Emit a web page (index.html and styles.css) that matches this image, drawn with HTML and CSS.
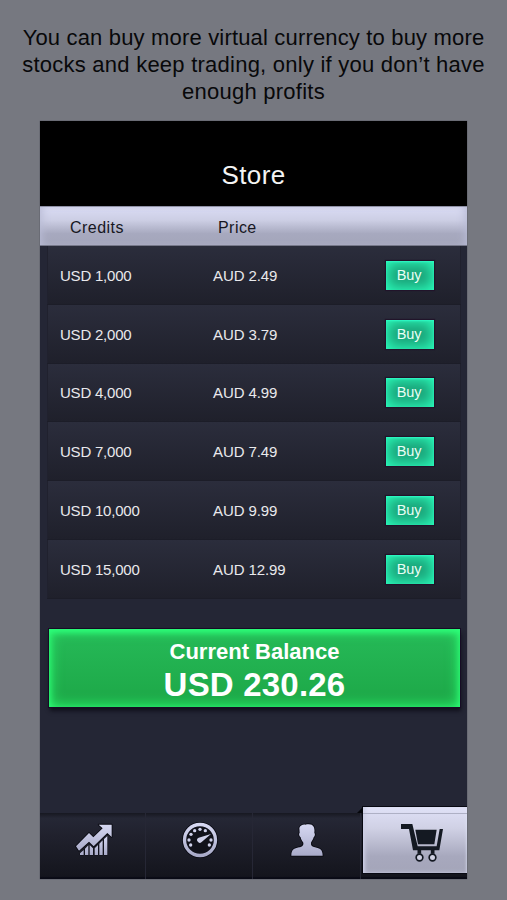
FILE: index.html
```html
<!DOCTYPE html>
<html lang="en">
<head>
<meta charset="utf-8">
<title>Store</title>
<link rel="stylesheet" href="styles.css">
</head>
<body>
<p class="intro"><span class="l1">You can buy more virtual currency to buy more</span><br><span class="l2">stocks and keep trading, only if you don’t have</span><br><span class="l3">enough profits</span></p>
<main class="phone">
  <header class="title"><h1>Store</h1></header>
  <div class="columns"><span>Credits</span><span class="price-head">Price</span></div>
  <ul class="offers">
    <li><span class="credits">USD 1,000</span><span class="price">AUD 2.49</span><button>Buy</button></li>
    <li><span class="credits">USD 2,000</span><span class="price">AUD 3.79</span><button>Buy</button></li>
    <li><span class="credits">USD 4,000</span><span class="price">AUD 4.99</span><button>Buy</button></li>
    <li><span class="credits">USD 7,000</span><span class="price">AUD 7.49</span><button>Buy</button></li>
    <li><span class="credits">USD 10,000</span><span class="price">AUD 9.99</span><button>Buy</button></li>
    <li><span class="credits">USD 15,000</span><span class="price">AUD 12.99</span><button>Buy</button></li>
  </ul>
  <section class="balance">
    <span class="label">Current Balance</span>
    <strong class="amount">USD 230.26</strong>
  </section>
  <nav class="tabs">
    <a class="tab">
      <svg width="40" height="40" viewBox="113 59 120 120">
        <defs><linearGradient id="silver" x1="0" y1="0" x2="0" y2="1"><stop offset="0" stop-color="#d6d8f2"/><stop offset="1" stop-color="#a9abc9"/></linearGradient></defs>
        <g fill="url(#silver)" stroke="#07080f" stroke-width="5" paint-order="stroke" stroke-linejoin="round">
          <path stroke-width="2" d="M131 164V159L142 149V164ZM146 164V145L156 135V164ZM160 164V134L170 144V164ZM175 164V144L185 134V164ZM189 164V130L199 120V164ZM203 164V116L213 107V164Z"/>
          <path d="M119 138 158 98 171 111 199 84 187 73H226V110L213 98 172 138 158 124 128 151Z"/>
        </g>
      </svg>
    </a>
    <a class="tab">
      <svg width="40" height="40" viewBox="104 59 120 120">
        <circle cx="164" cy="119" r="54" fill="#080911"/>
        <circle cx="164" cy="119" r="46.5" fill="#11121b" stroke="url(#silver)" stroke-width="10"/>
        <g fill="#cfd1eb">
          <circle cx="136" cy="134" r="5"/><circle cx="131" cy="119" r="5"/><circle cx="137" cy="102" r="5"/><circle cx="148" cy="91" r="5"/><circle cx="164" cy="87" r="5"/><circle cx="180" cy="91" r="5"/><circle cx="197" cy="119" r="5"/><circle cx="192" cy="134" r="5"/>
          <path d="M197 101 160 112A8 8 0 1 0 169 125Z"/>
        </g>
      </svg>
    </a>
    <a class="tab">
      <svg width="40" height="40" viewBox="106 59 120 120">
        <path fill="url(#silver)" stroke="#07080f" stroke-width="5" paint-order="stroke" d="M143 83C145 76 154 71 162 73C167 70 176 72 180 73C187 77 190 85 188 98C191 99 190 108 186 111C184 118 180 123 178 127C177 136 182 139 190 141C205 144 213 148 213 166H119C119 148 127 144 142 141C151 139 156 136 155 127C151 122 148 117 147 111C142 108 141 99 144 98Z"/>
      </svg>
    </a>
    <a class="tab active">
      <svg width="44" height="40" viewBox="144 86 132 120">
        <path fill="#141922" d="M147 89H181L197 156H254L263 104H273L262 168H183L171 104H147ZM190 106H254L247 150H198Z"/>
        <path d="M202 166V178M242 166V178" stroke="#141922" stroke-width="11"/>
        <g fill="#cfd0e2" stroke="#141922" stroke-width="5"><circle cx="202.500" cy="189.500" r="10"/><circle cx="241.500" cy="189.500" r="10"/></g>
      </svg>
    </a>
  </nav>
</main>
</body>
</html>
```

FILE: styles.css
```css
* { box-sizing: border-box; }
body {
  margin: 0;
  width: 507px;
  height: 900px;
  overflow: hidden;
  background: #767880;
  font-family: "Liberation Sans", Arial, sans-serif;
}
.intro {
  margin: 0;
  height: 121px;
  padding-top: 24px;
  font-size: 22px;
  line-height: 27px;
  text-align: center;
  white-space: nowrap;
  letter-spacing: .24px;
  color: #08080a;
}
.intro .l1 { letter-spacing: .17px; }
.phone {
  width: 427px;
  height: 758px;
  margin-left: 40px;
  display: flex;
  flex-direction: column;
  background: #242635;
  box-shadow: 0 0 1px #333541;
}
.title {
  height: 85px;
  padding-top: 39px;
  background: #000;
  text-align: center;
}
h1 {
  margin: 0;
  font-size: 26px;
  line-height: 31px;
  font-weight: 400;
  letter-spacing: .4px;
  color: #f4f4f4;
}
.columns {
  height: 40px;
  display: flex;
  padding: 2px 0 0 30px;
  font-size: 16px;
  line-height: 38px;
  letter-spacing: .45px;
  color: #17171f;
  background: linear-gradient(#dadcf4, #cccee4 35%, #a7a9bf 70%, #a3a5ba);
  border-top: 1px solid #8f91a6;
  border-bottom: 1px solid #77798b;
  box-shadow: inset 6px 0 8px -4px #b9bbd5, inset -6px 0 8px -4px #b9bbd5;
}
.columns span { width: 148px; }
.columns .price-head { line-height: 37px; }
.offers {
  list-style: none;
  margin: 0 6px 0 7px;
  padding: 0;
}
.offers li {
  height: 58.8px;
  display: grid;
  grid-template-columns: 153px 173px 48px;
  align-items: center;
  padding: 1px 0 0 13px;
  color: #e9e9ec;
  font-size: 15px;
  letter-spacing: -.22px;
  background: linear-gradient(#2b2d3c, #1f202b);
  border-bottom: 1px solid #1c1d28;
  box-shadow: inset 1px 0 #20212e, inset -1px 0 #20212e;
}
.offers .price { letter-spacing: -.1px; }
button {
  width: 48px;
  height: 29px;
  padding: 0 2px 1px 0;
  border: 0;
  font: 14.5px "Liberation Sans", Arial, sans-serif;
  letter-spacing: -.2px;
  color: #e9fff5;
  background: #1ba57a;
  box-shadow: inset 0 0 13px 2px #2bffbd, inset 0 1px 2px #35f8da, 0 0 1px 1px #21142a;
}
.balance {
  width: 411px;
  height: 78px;
  margin: 30px 0 0 9px;
  padding-top: 9px;
  display: flex;
  flex-direction: column;
  align-items: center;
  color: #fff;
  background: linear-gradient(#26ba58, #1da747);
  box-shadow: inset 0 3px 6px #2dff7b, inset 0 0 13px 1px #2bff70, 0 0 0 1px #170c25, 1px 4px 4px #10101b;
}
.label { font-size: 22px; line-height: 27px; font-weight: 700; }
.amount { font-size: 33px; line-height: 39px; letter-spacing: .2px; }
.tabs {
  height: 66px;
  margin-top: auto;
  display: grid;
  grid-template-columns: 106px 107px 110px 104px;
  background: linear-gradient(#171821, #252735 8%, #20212d 35%, #14151d 96%, #090a15 98%);
}
.tab {
  display: flex;
  justify-content: center;
  padding-top: 7px;
  border-right: 1px solid #262735;
}
.tab:nth-child(1) { padding-left: 2px; }
.tab:nth-child(2) { padding-left: 1px; }
.tab:nth-child(3) { margin-right: 2px; }
.tab.active {
  position: relative;
  height: 66px;
  margin-top: -6px;
  padding: 16px 0 0 14px;
  border: 0;
  background: linear-gradient(#dfe0f7, #d0d1e5 32%, #a7a8bd 75%, #a4a5b9);
  box-shadow: 0 0 0 1px #080912, inset 2px 0 4px #c9cbe3, inset 0 2px 3px #eceeff;
  clip-path: inset(-2px 0 -2px -7px);
}
.tab.active::before {
  content: "";
  position: absolute;
  left: -6px;
  top: 0;
  border-left: 6px solid transparent;
  border-bottom: 6px solid #05060b;
}
.tab.active::after {
  content: "";
  position: absolute;
  left: 0;
  right: 0;
  top: 6px;
  height: 1px;
  background: #aeb0c5;
}
```
